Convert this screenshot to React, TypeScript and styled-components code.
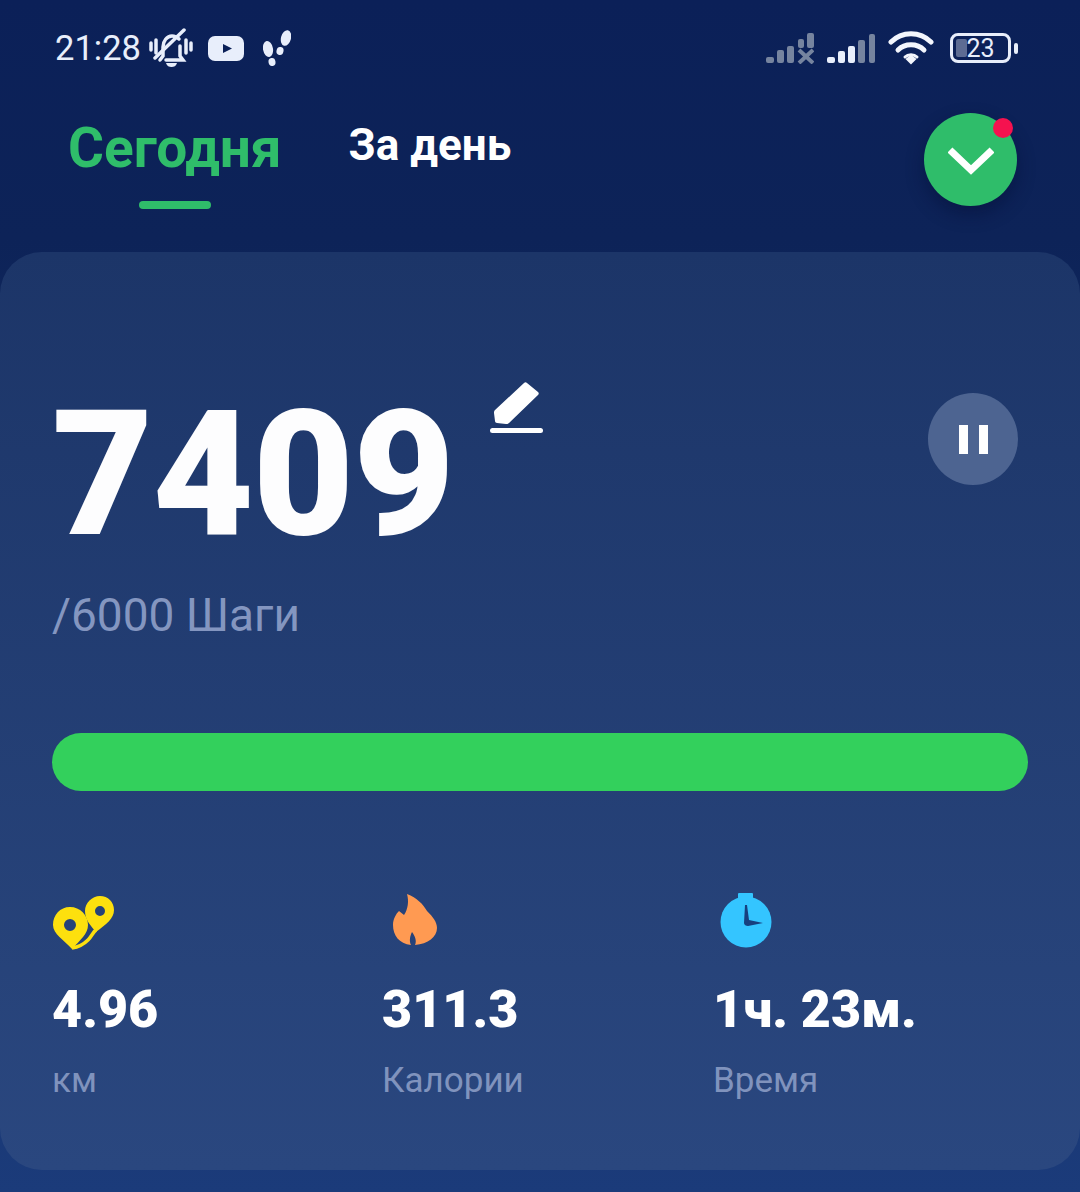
import React from 'react';
import styled, { createGlobalStyle } from 'styled-components';

const GlobalStyle = createGlobalStyle`
  html, body {
    margin: 0;
    padding: 0;
    background: #0b2058;
  }
  * {
    box-sizing: border-box;
  }
`;

const stats = [
  { id: 'distance', value: '4.96', label: 'км', inset: 0 },
  { id: 'calories', value: '311.3', label: 'Калории', inset: 8 },
  { id: 'time', value: '1ч. 23м.', label: 'Время', inset: 7 },
];

function StatIcon({ id }: { id: string }) {
  if (id === 'distance') {
    return (
      <svg width="64" height="56" viewBox="0 0 64 56">
        <path
          fill="#fde00e"
          fillRule="evenodd"
          d="M18 12c10 0 18 8 18 18 0 9-8 15-16 24C12 45 1 39 1 30 1 20 8 12 18 12zm0 12a6 6 0 1 0 0 12 6 6 0 0 0 0-12z"
        />
        <path
          fill="#fde00e"
          fillRule="evenodd"
          d="M48 1c8 0 14 6 14 14 0 9-8 14-18 22-5-6-11-12-11-21 0-8 7-15 15-15zm0 10a5 5 0 1 0 0 10 5 5 0 0 0 0-10z"
        />
        <path fill="none" stroke="#fde00e" strokeWidth="3.500" d="M44 35c-3 2-4 6-8 10-4 4-9 7-16 8" />
      </svg>
    );
  }
  if (id === 'calories') {
    return (
      <svg width="50" height="59" viewBox="0 0 50 59">
        <path
          fill="#ff9a52"
          d="M17 2C27 6 33 12 37 19 43 25 47 30 47 36 47 45 38 52 25 53 27 49 25 44 22 40 20 44 19 49 21 53 9 52 3 43 3 33 3 27 6 22 9 19L14 23C18 17 19 9 17 2z"
        />
      </svg>
    );
  }
  return (
    <svg width="54" height="58" viewBox="0 0 54 58">
      <rect x="18" y="0" width="15" height="7" rx="1" fill="#34c5ff" />
      <circle cx="26" cy="29" r="25.500" fill="#34c5ff" />
      <path fill="#17407f" d="M25 12h2l2 15 14 3-15 3c-2 0-4-1-4-3z" />
    </svg>
  );
}

export default function App() {
  return (
    <Page>
      <GlobalStyle />
      <StatusBar>
        <StatusGroup $gap={8}>
          <Clock>21:28</Clock>
          <svg width="44" height="40" viewBox="0 0 44 40" fill="none" stroke="#e8eefb" strokeWidth="3.500" strokeLinecap="round">
            <path d="M2 15v7M7 12v13M37 12v13M42 15v7" />
            <path d="M11 32l3-4v-9c0-6 4-11 9-11 3 0 5 1 7 3M31 18v10l3 4H17" />
            <path d="M6 30L35 2" />
            <path fill="#e8eefb" stroke="none" d="M17 35h11c-1 3-3 4-5.500 4s-4.500-1-5.500-4z" />
          </svg>
          <YoutubeBadge>
            <svg width="36" height="25" viewBox="0 0 36 25">
              <rect width="36" height="25" rx="7" fill="#e8eefb" />
              <path d="M15 8l9 4.500-9 4.500z" fill="#0b2058" />
            </svg>
          </YoutubeBadge>
          <svg width="28" height="38" viewBox="0 0 28 38" fill="#e8eefb">
            <ellipse cx="5" cy="20" rx="5" ry="8" transform="rotate(-10 5 20)" />
            <ellipse cx="9" cy="33" rx="3.500" ry="4" transform="rotate(-10 9 33)" />
            <ellipse cx="23" cy="9" rx="5" ry="8" transform="rotate(14 23 9)" />
            <ellipse cx="17" cy="22" rx="3.500" ry="4" transform="rotate(14 17 22)" />
          </svg>
        </StatusGroup>
        <StatusGroup $gap={13}>
          <svg width="48" height="32" viewBox="0 0 48 32" fill="#76849f">
            <rect x="0" y="25" width="8" height="6" rx="2" />
            <rect x="11" y="18" width="7" height="13" rx="2" />
            <rect x="21" y="14" width="7" height="17" rx="2" />
            <rect x="32" y="7" width="6" height="9" rx="2" />
            <rect x="41" y="1" width="7" height="15" rx="2" />
            <path d="M33 18l14 13M47 18L33 31" stroke="#76849f" strokeWidth="4" />
          </svg>
          <svg width="48" height="32" viewBox="0 0 48 32">
            <rect x="0" y="25" width="8" height="6" rx="2" fill="#e8eefb" />
            <rect x="11" y="19" width="7" height="12" rx="2" fill="#e8eefb" />
            <rect x="21" y="14" width="7" height="17" rx="2" fill="#e8eefb" />
            <rect x="31" y="8" width="7" height="23" rx="2" fill="#76849f" />
            <rect x="42" y="2" width="6" height="29" rx="2" fill="#76849f" />
          </svg>
          <svg width="46" height="36" viewBox="0 0 46 36" fill="none" stroke="#f3f6fd" strokeWidth="5" strokeLinecap="round">
            <path d="M3 12c11-11 29-11 40 0" />
            <path d="M10 20c7-7 19-7 26 0" />
            <path d="M17 27c3-3 9-3 12 0" strokeWidth="3" />
            <path d="M19 29l4-3 4 3-4 4z" fill="#f3f6fd" strokeWidth="2" />
          </svg>
          <Battery>
            <BatteryBody>
              <BatteryFill />
              <BatteryText>23</BatteryText>
            </BatteryBody>
            <BatteryCap />
          </Battery>
        </StatusGroup>
      </StatusBar>

      <Header>
        <Tabs>
          <Tab $active>
            Сегодня
            <TabLine />
          </Tab>
          <Tab>За день</Tab>
        </Tabs>
        <ExpandButton>
          <svg width="46" height="32" viewBox="0 0 46 32" fill="none" stroke="#fff" strokeWidth="7">
            <path d="M2 6l21 20L44 6" />
          </svg>
          <NotifyDot />
        </ExpandButton>
      </Header>

      <Card>
        <StepsRow>
          <StepsGroup>
            <Steps>7409</Steps>
            <svg width="54" height="56" viewBox="0 0 54 56">
              <path
                fill="#fff"
                d="M34 3c1-1 2-1 3 0l11 9c1 1 1 2 0 3L19 43c-1 1-2 1-3 1l-9-1c-1 0-2-1-2-2l-1-8c0-1 0-2 1-3z"
              />
              <rect x="0" y="48" width="53" height="5" rx="2.500" fill="#fff" />
            </svg>
          </StepsGroup>
          <PauseButton>
            <PauseBar />
            <PauseBar />
          </PauseButton>
        </StepsRow>
        <Goal>/6000 Шаги</Goal>
        <ProgressBar />
        <StatsGrid>
          {stats.map((item) => (
            <Stat key={item.id}>
              <IconSlot $inset={item.inset}>
                <StatIcon id={item.id} />
              </IconSlot>
              <StatValue>{item.value}</StatValue>
              <StatLabel>{item.label}</StatLabel>
            </Stat>
          ))}
        </StatsGrid>
      </Card>
    </Page>
  );
}

const Page = styled.div`
  width: 1080px;
  height: 1192px;
  overflow: hidden;
  display: flex;
  flex-direction: column;
  background: linear-gradient(180deg, #0b2058 0%, #0d2358 20%, #1b3b7a 100%);
  font-family: Roboto, "Liberation Sans", sans-serif;
`;
const StatusBar = styled.div`
  height: 96px;
  padding: 0 62px 0 55px;
  display: flex;
  align-items: center;
  justify-content: space-between;
`;
const StatusGroup = styled.div<{ $gap: number }>`
  display: flex;
  align-items: center;
  gap: ${({ $gap }) => $gap}px;
`;
const Clock = styled.span`
  font-size: 34.500px;
  color: #e8eefb;
`;
const YoutubeBadge = styled.span`
  display: flex;
  margin: 0 11px 0 7px;
`;
const Battery = styled.div`
  display: flex;
  align-items: center;
  gap: 3px;
  margin-left: 3px;
`;
const BatteryBody = styled.div`
  position: relative;
  width: 61px;
  height: 30px;
  border: 3px solid #e8eefb;
  border-radius: 8px;
  display: flex;
  align-items: center;
  justify-content: center;
`;
const BatteryFill = styled.div`
  position: absolute;
  left: 3px;
  top: 3px;
  bottom: 3px;
  width: 11px;
  border-radius: 2px;
  background: #5d6c93;
`;
const BatteryText = styled.span`
  position: relative;
  font-size: 25px;
  color: #e8eefb;
`;
const BatteryCap = styled.div`
  width: 4px;
  height: 11px;
  border-radius: 2px;
  background: #e8eefb;
`;
const Header = styled.div`
  height: 156px;
  padding: 17px 63px 0 68px;
  display: flex;
  align-items: flex-start;
  justify-content: space-between;
`;
const Tabs = styled.div`
  display: flex;
  align-items: flex-start;
  gap: 67px;
`;
const Tab = styled.div<{ $active?: boolean }>`
  position: relative;
  font-weight: 700;
  font-size: ${({ $active }) => ($active ? '55px' : '44px')};
  line-height: ${({ $active }) => ($active ? '70px' : '64px')};
  color: ${({ $active }) => ($active ? '#2fbd6a' : '#fff')};
`;
const TabLine = styled.div`
  position: absolute;
  left: 71px;
  top: 88px;
  width: 72px;
  height: 8px;
  border-radius: 4px;
  background: #2fbd6a;
`;
const ExpandButton = styled.div`
  position: relative;
  width: 93px;
  height: 93px;
  border-radius: 50%;
  background: #2fbd6a;
  box-shadow: 0 8px 18px rgba(4, 14, 50, 0.45);
  display: flex;
  align-items: center;
  justify-content: center;
`;
const NotifyDot = styled.div`
  position: absolute;
  top: 5px;
  right: 4px;
  width: 20px;
  height: 20px;
  border-radius: 50%;
  background: #f5124f;
`;
const Card = styled.div`
  height: 918px;
  padding: 130px 52px 0;
  border-radius: 42px;
  background: linear-gradient(180deg, #1c3568 0%, #2a477f 100%);
`;
const StepsRow = styled.div`
  display: flex;
  align-items: flex-start;
  justify-content: space-between;
  padding-right: 10px;
`;
const StepsGroup = styled.div`
  display: flex;
  align-items: flex-start;
  gap: 36px;
  svg {
    margin-top: -2px;
  }
`;
const Steps = styled.div`
  font-size: 175px;
  font-weight: 900;
  line-height: 178px;
  letter-spacing: -1px;
  color: #fdfdfe;
  margin-top: 4px;
`;
const PauseButton = styled.div`
  width: 90px;
  height: 92px;
  margin-top: 11px;
  border-radius: 50%;
  background: #4d6491;
  display: flex;
  align-items: center;
  justify-content: center;
  gap: 11px;
`;
const PauseBar = styled.div`
  width: 9px;
  height: 29px;
  background: #fff;
`;
const Goal = styled.div`
  margin-top: 26px;
  font-size: 46px;
  line-height: 50px;
  color: #8496c0;
`;
const ProgressBar = styled.div`
  margin-top: 93px;
  height: 58px;
  border-radius: 29px;
  background: #33d05c;
`;
const StatsGrid = styled.div`
  margin-top: 98px;
  display: grid;
  grid-template-columns: 330px 331px 1fr;
`;
const Stat = styled.div`
  display: flex;
  flex-direction: column;
`;
const IconSlot = styled.div<{ $inset: number }>`
  height: 62px;
  padding-left: ${({ $inset }) => $inset}px;
  display: flex;
  align-items: flex-end;
`;
const StatValue = styled.div`
  margin-top: 31px;
  font-size: 52px;
  font-weight: 900;
  line-height: 56px;
  color: #fff;
`;
const StatLabel = styled.div`
  margin-top: 23px;
  font-size: 35px;
  line-height: 40px;
  color: #8093bd;
`;
